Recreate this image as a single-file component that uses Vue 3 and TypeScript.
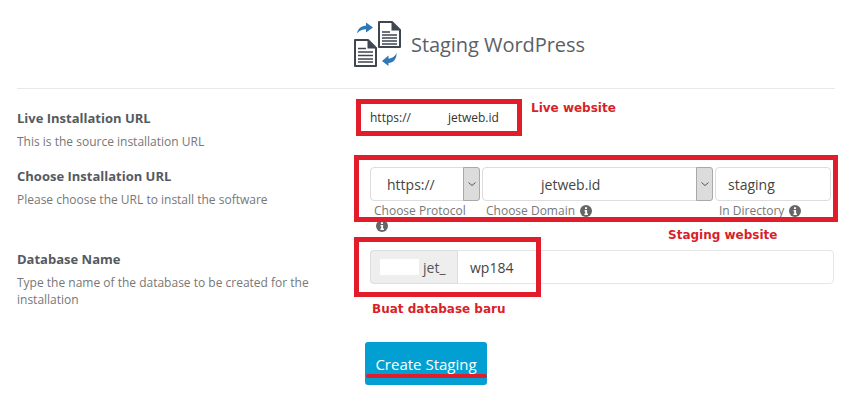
<script setup lang="ts">
const infoPath = 'M6 0a6 6 0 1 0 0 12A6 6 0 0 0 6 0z'
</script>

<template>
  <div class="page">
    <header class="head">
      <svg class="logo" width="50" height="50" viewBox="0 0 50 50" aria-hidden="true">
        <path d="M4 14.500C5 9 9 6.800 13 6.800V3.500L20 8.500 13 13.500V10.300C9.500 10.300 6.500 11.500 4 14.500z" fill="#2f78b5"/>
        <path d="M43.500 34C42.500 37 39 39.500 35.500 39.500V36.500L29 42 35.500 47V44C40 44 44 40 43.500 34z" fill="#2f78b5"/>
        <path d="M26 3h13l8 8v17H26z" fill="#fff" stroke="#3f4650" stroke-width="2" stroke-linejoin="round"/>
        <path d="M2 21h13l8 8v18H2z" fill="#fff" stroke="#3f4650" stroke-width="2" stroke-linejoin="round"/>
        <path d="M38.500 3v8.500H47zM14.500 21v8.500H23z" fill="#3f4650"/>
        <path d="M29 13h8M29 16h15M29 19h15M29 22h15M29 25h15M5 29.500h8M5 33h15M5 36.500h15M5 40h15M5 43h15" stroke="#3f4650" stroke-width="1.600" fill="none"/>
      </svg>
      <h1 class="title">Staging WordPress</h1>
    </header>

    <section class="row row-live">
      <div class="info">
        <div class="name">Live Installation URL</div>
        <div class="desc">This is the source installation URL</div>
      </div>
      <div class="live-value">https://<span class="blank-live"></span>jetweb.id</div>
    </section>

    <section class="row row-choose">
      <div class="info">
        <div class="name">Choose Installation URL</div>
        <div class="desc">Please choose the URL to install the software</div>
      </div>
      <div class="fields">
        <div class="field field-proto">
          <div class="select">
            <span class="select-text">https://</span>
            <span class="arrow"><svg width="10" height="6" viewBox="0 0 10 6"><path d="M1.500 1.500 5 4.500l3.500-3" fill="none" stroke="#555" stroke-width="1"/></svg></span>
          </div>
          <div class="hint hint-proto">Choose Protocol
            <svg class="i" width="12" height="12" viewBox="0 0 12 12"><path :d="infoPath" fill="#666"/><path d="M5 2.300h2v1.600H5zM4.600 5h2.500v3.500h.8V10H4.400V8.500h.8V6.400h-.6z" fill="#fff"/></svg>
          </div>
        </div>
        <div class="field field-domain">
          <div class="select">
            <span class="select-text domain-text">jetweb.id</span>
            <span class="arrow"><svg width="10" height="6" viewBox="0 0 10 6"><path d="M1.500 1.500 5 4.500l3.500-3" fill="none" stroke="#555" stroke-width="1"/></svg></span>
          </div>
          <div class="hint hint-domain">Choose Domain
            <svg class="i" width="12" height="12" viewBox="0 0 12 12"><path :d="infoPath" fill="#666"/><path d="M5 2.300h2v1.600H5zM4.600 5h2.500v3.500h.8V10H4.400V8.500h.8V6.400h-.6z" fill="#fff"/></svg>
          </div>
        </div>
        <div class="field field-dir">
          <div class="input">staging</div>
          <div class="hint hint-dir">In Directory
            <svg class="i" width="12" height="12" viewBox="0 0 12 12"><path :d="infoPath" fill="#666"/><path d="M5 2.300h2v1.600H5zM4.600 5h2.500v3.500h.8V10H4.400V8.500h.8V6.400h-.6z" fill="#fff"/></svg>
          </div>
        </div>
      </div>
    </section>

    <section class="row row-db">
      <div class="info">
        <div class="name">Database Name</div>
        <div class="desc">Type the name of the database to be created for the installation</div>
      </div>
      <div class="group">
        <div class="addon"><span class="blank-db"></span>jet_</div>
        <div class="db-value">wp184</div>
      </div>
    </section>

    <div class="actions">
      <button class="btn" type="button">Create Staging</button>
    </div>

    <div class="mark mark-live"></div>
    <div class="mark mark-choose"></div>
    <div class="mark mark-db"></div>
    <div class="underline"></div>
    <div class="note note-live">Live website</div>
    <div class="note note-staging">Staging website</div>
    <div class="note note-db">Buat database baru</div>
  </div>
</template>

<style>
html, body { margin: 0; background: #fff; }
</style>

<style scoped>
.page {
  position: relative;
  width: 852px;
  height: 403px;
  overflow: hidden;
  box-sizing: border-box;
  padding: 0 17px;
  font-family: "Open Sans", sans-serif;
  background: #fff;
}
.head {
  height: 89px;
  box-sizing: border-box;
  border-bottom: 1px solid #e8e8e8;
  width: 818px;
  padding: 19px 0 0 336px;
  display: flex;
  align-items: flex-start;
  gap: 8px;
}
.logo { flex: none; }
.title {
  margin: 13px 0 0;
  font-size: 20px;
  line-height: 26px;
  font-weight: 400;
  color: #5b6066;
  letter-spacing: -0.05px;
}
.row {
  display: grid;
  grid-template-columns: 353px 1fr;
  margin-left: -17px;
}
.info { padding-left: 17px; }
.name {
  font-size: 13px;
  line-height: 18px;
  font-weight: 700;
  color: #555a5f;
}
.desc {
  margin-top: 6px;
  font-size: 12px;
  line-height: 17px;
  color: #777;
  width: 300px;
}
.row-live { padding-top: 20px; height: 37px; }
.live-value {
  padding: 0 0 0 17px;
  font-size: 12px;
  line-height: 18px;
  color: #333;
}
.blank-live { display: inline-block; width: 37px; }
.row-choose { padding-top: 21px; height: 62px; }
.fields {
  display: flex;
  padding-left: 17px;
  gap: 2px;
}
.field { display: flex; flex-direction: column; }
.field-proto { width: 110px; }
.field-domain { width: 231px; }
.field-dir { width: 116px; }
.select, .input {
  box-sizing: border-box;
  height: 34px;
  border: 1px solid #ddd;
  border-radius: 4px;
  background: #fff;
  display: flex;
  align-items: center;
  font-size: 14px;
  color: #444;
}
.select-text { flex: 1; padding-left: 16px; }
.domain-text { padding-left: 58px; }
.arrow {
  flex: none;
  width: 17px;
  align-self: stretch;
  box-sizing: border-box;
  border: 1px solid #a9a9a9;
  border-radius: 0 3px 3px 0;
  margin: -1px -1px -1px 0;
  background: #dcdcdc;
  display: flex;
  align-items: center;
  justify-content: center;
}
.input { padding-left: 12px; }
.hint {
  font-size: 12px;
  line-height: 17px;
  color: #777;
  margin-top: 1px;
}
.hint-proto { padding-left: 4px; line-height: 15px; margin-top: 2px; }
.hint-domain { padding-left: 4px; }
.hint-dir { padding-left: 4px; }
.i { vertical-align: -2px; margin-left: 2px; }
.row-db { padding-top: 21px; height: 70px; }
.group {
  box-sizing: border-box;
  margin-left: 17px;
  width: 464px;
  height: 34px;
  border: 1px solid #e6e6e6;
  border-radius: 4px;
  display: flex;
  align-items: center;
  font-size: 14px;
}
.addon {
  box-sizing: border-box;
  width: 88px;
  height: 34px;
  margin: -1px 0 -1px -1px;
  background: #eee;
  border: 1px solid #ddd;
  border-radius: 4px 0 0 4px;
  color: #555;
  display: flex;
  align-items: center;
  padding-left: 9px;
}
.blank-db {
  display: inline-block;
  width: 39px;
  height: 16px;
  background: #fff;
  margin-right: 4px;
}
.db-value { padding-left: 12px; color: #444; }
.actions { padding: 22px 0 0 348px; }
.btn {
  display: block;
  width: 122px;
  height: 43px;
  border: 0;
  border-radius: 3px;
  background: #02a0d2;
  color: #fff;
  font-family: inherit;
  font-size: 15px;
  padding: 1px 0 0;
}
.mark {
  position: absolute;
  box-sizing: border-box;
  border: 5px solid #e21d2b;
}
.mark-live { left: 356px; top: 99px; width: 166px; height: 37px; }
.mark-choose { left: 354px; top: 155px; width: 484px; height: 67px; }
.mark-db { left: 354px; top: 237px; width: 187px; height: 60px; }
.underline {
  position: absolute;
  left: 366px;
  top: 374px;
  width: 121px;
  height: 4px;
  border-radius: 2px;
  background: #e21d2b;
}
.note {
  position: absolute;
  font-family: "DejaVu Sans", sans-serif;
  font-weight: 700;
  font-size: 12px;
  line-height: 16px;
  color: #d81f2a;
}
.note-live { left: 531px; top: 100px; }
.note-staging { left: 668px; top: 227px; }
.note-db { left: 372px; top: 301px; }
</style>
